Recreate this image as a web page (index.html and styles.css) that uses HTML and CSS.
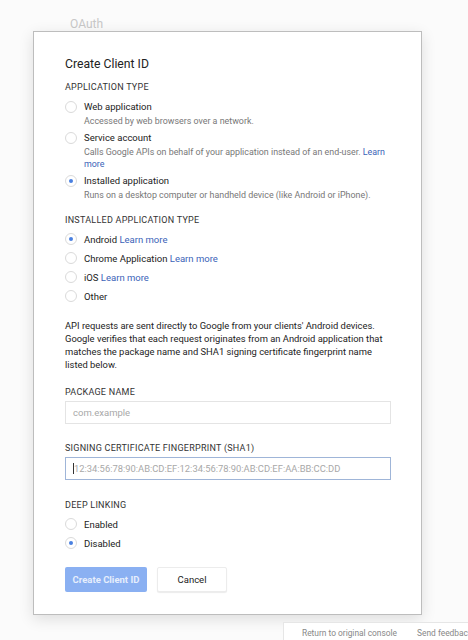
FILE: index.html
```html
<!DOCTYPE html>
<html>
<head>
<meta charset="utf-8">
<link rel="stylesheet" href="styles.css">
</head>
<body>
<div class="page">
  <div class="crumb">OAuth</div>
  <div class="dialog">
    <h1 class="title">Create Client ID</h1>
    <div class="section-label">APPLICATION TYPE</div>
    <div class="radio-list">
      <div class="option">
        <span class="radio"></span>
        <div class="opt-body">
          <div class="opt-label">Web application</div>
          <div class="opt-desc">Accessed by web browsers over a network.</div>
        </div>
      </div>
      <div class="option">
        <span class="radio"></span>
        <div class="opt-body">
          <div class="opt-label">Service account</div>
          <div class="opt-desc">Calls Google APIs on behalf of your application instead of an end-user. <a class="link">Learn more</a></div>
        </div>
      </div>
      <div class="option">
        <span class="radio checked"></span>
        <div class="opt-body">
          <div class="opt-label">Installed application</div>
          <div class="opt-desc">Runs on a desktop computer or handheld device (like Android or iPhone).</div>
        </div>
      </div>
    </div>

    <div class="section-label sec2">INSTALLED APPLICATION TYPE</div>
    <div class="simple-list">
      <div class="option simple"><span class="radio checked"></span><span class="opt-label">Android <a class="link">Learn more</a></span></div>
      <div class="option simple"><span class="radio"></span><span class="opt-label">Chrome Application <a class="link">Learn more</a></span></div>
      <div class="option simple"><span class="radio"></span><span class="opt-label">iOS <a class="link">Learn more</a></span></div>
      <div class="option simple"><span class="radio"></span><span class="opt-label">Other</span></div>
    </div>

    <p class="info">API requests are sent directly to Google from your clients' Android devices. Google verifies that each request originates from an Android application that matches the package name and SHA1 signing certificate fingerprint name listed below.</p>

    <div class="field">
      <div class="section-label">PACKAGE NAME</div>
      <div class="input"><span class="placeholder">com.example</span></div>
    </div>

    <div class="field">
      <div class="section-label">SIGNING CERTIFICATE FINGERPRINT (SHA1)</div>
      <div class="input focused"><span class="caret"></span><span class="placeholder">12:34:56:78:90:AB:CD:EF:12:34:56:78:90:AB:CD:EF:AA:BB:CC:DD</span></div>
    </div>

    <div class="section-label sec3">DEEP LINKING</div>
    <div class="simple-list">
      <div class="option simple"><span class="radio"></span><span class="opt-label">Enabled</span></div>
      <div class="option simple"><span class="radio checked"></span><span class="opt-label">Disabled</span></div>
    </div>

    <div class="actions">
      <button class="btn primary">Create Client ID</button>
      <button class="btn secondary">Cancel</button>
    </div>
  </div>
  <div class="footer">
    <div class="footer-bar">
      <span class="footer-link">Return to original console</span>
      <span class="footer-link">Send feedback</span>
    </div>
  </div>
</div>
</body>
</html>
```

FILE: styles.css
```css
html, body {
  margin: 0;
  padding: 0;
  background: #fbfbfb;
  overflow: hidden;
}
body {
  font-family: Roboto, "Liberation Sans", Arial, sans-serif;
  color: #222;
  width: 468px;
  height: 640px;
}
.page {
  width: 468px;
  height: 640px;
  display: flex;
  flex-direction: column;
}
.crumb {
  margin: 17px 0 0 70px;
  height: 14px;
  font-size: 12px;
  color: #c8c8c8;
  line-height: 14px;
}
.dialog {
  margin-left: 33px;
  width: 389px;
  box-sizing: border-box;
  background: #fff;
  border: 1px solid #bdbdbd;
  box-shadow: 0 4px 14px rgba(0,0,0,0.12);
  padding: 24px 31px 22px 31px;
}
.title {
  margin: 0;
  font-size: 12.2px;
  font-weight: 400;
  line-height: 16px;
  color: #222;
}
.section-label {
  margin-top: 9px;
  font-size: 9px;
  letter-spacing: 0.25px;
  line-height: 12px;
  color: #333;
}
.sec2 { margin-top: 13px; }
.sec3 { margin-top: 19px; }
.radio-list {
  margin-top: 7px;
  display: flex;
  flex-direction: column;
  gap: 4.5px;
}
.option {
  display: flex;
  align-items: flex-start;
  gap: 7px;
}
.radio {
  flex: none;
  width: 10px;
  height: 10px;
  border: 1px solid #dadada;
  border-radius: 50%;
  background: #fff;
  position: relative;
  margin-top: 1px;
}
.radio.checked::after {
  content: "";
  position: absolute;
  left: 3px;
  top: 3px;
  width: 4px;
  height: 4px;
  border-radius: 50%;
  background: #4a80e0;
}
.opt-body { display: flex; flex-direction: column; }
.opt-label {
  font-size: 9.5px;
  line-height: 13px;
  color: #222;
}
.opt-desc {
  font-size: 8.9px;
  line-height: 12px;
  color: #777;
  margin-top: 1.5px;
}
.link { color: #3b63b8; text-decoration: none; }
.simple-list {
  margin-top: 7px;
  display: flex;
  flex-direction: column;
  gap: 6px;
}
.option.simple { align-items: center; }
.option.simple .radio { margin-top: 0; }
.info {
  margin: 16px 0 0 0;
  font-size: 9.4px;
  line-height: 13px;
  color: #222;
  padding-right: 2px;
}
.field { margin-top: 15px; }
.field + .field { margin-top: 18px; }
.field .section-label { margin-top: 0; }
.input {
  margin-top: 3px;
  width: 326px;
  height: 23px;
  box-sizing: border-box;
  border: 1px solid #e4e4e4;
  display: flex;
  align-items: center;
  padding-left: 7px;
  font-size: 9.5px;
}
.input.focused {
  border-color: #9fb5d8;
  padding-left: 7px;
}
.placeholder { color: #a8a8a8; }
.caret {
  display: inline-block;
  width: 1px;
  height: 11px;
  background: #333;
}
.focused .placeholder { font-size: 9.4px; }
.actions {
  margin-top: 17px;
  display: flex;
  gap: 10px;
}
.btn {
  font-family: inherit;
  font-size: 9.5px;
  height: 25px;
  border-radius: 2px;
  padding: 0;
}
.btn.primary {
  width: 82px;
  background: #8ab0f2;
  color: #e6eefc;
  border: none;
  font-weight: 700;
}
.btn.secondary {
  width: 70px;
  background: #fff;
  color: #222;
  border: 1px solid #ececec;
  box-shadow: 0 1px 1px rgba(0,0,0,0.08);
}
.footer {
  margin-top: 7px;
  display: flex;
  padding-left: 283px;
}
.footer-bar {
  flex: none;
  width: 220px;
  height: 20px;
  border-left: 1px solid #e6e6e6;
  border-top: 1px solid #e6e6e6;
  display: flex;
  align-items: center;
  gap: 20px;
  padding-left: 18px;
  font-size: 8.4px;
  color: #888;
  background: #fff;
}
.footer-link { white-space: nowrap; }
```
